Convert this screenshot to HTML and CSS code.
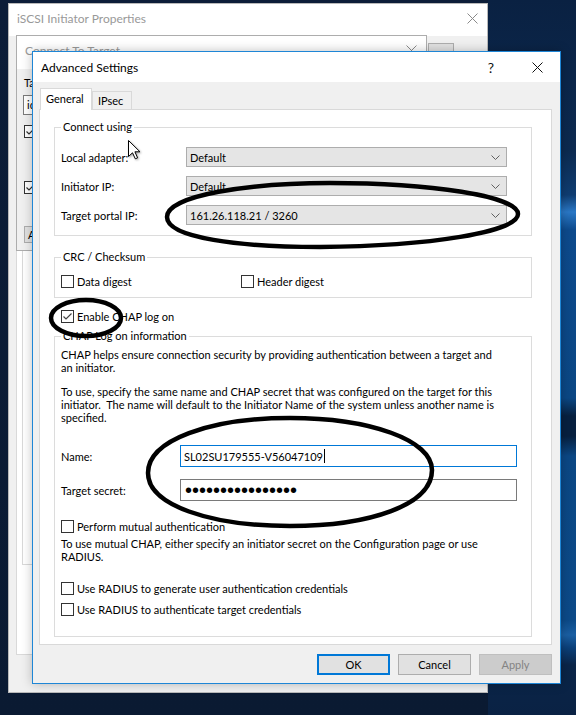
FILE: index.html
```html
<!DOCTYPE html>
<html lang="en">
<head>
<meta charset="utf-8">
<title>Advanced Settings</title>
<link rel="stylesheet" href="styles.css">
</head>
<body>
<div class="win win-iscsi">
  <div class="titlebar tb-small">
    <span class="title inactive">iSCSI Initiator Properties</span>
    <span class="tb-btn tb-btn-small"><svg width="11" height="11" viewBox="0 0 11 11"><path d="M0.5 0.5 L10.5 10.5 M10.5 0.5 L0.5 10.5" stroke="#8a8a8a" stroke-width="1" fill="none"/></svg></span>
  </div>
  <div class="iscsi-body">
    <span class="mini-btn">..</span>
    <div class="bg-tabpage">
      <div class="bg-innerbox"></div>
    </div>
    <div class="btnrow bg-btnrow">
      <span class="btn"></span>
      <span class="btn"></span>
      <span class="btn"></span>
    </div>
  </div>
</div>

<div class="win win-connect">
  <div class="titlebar tb-connect">
    <span class="title inactive">Connect To Target</span>
    <span class="tb-btn tb-btn-small"><svg width="11" height="11" viewBox="0 0 11 11"><path d="M0.5 0.5 L10.5 10.5 M10.5 0.5 L0.5 10.5" stroke="#8a8a8a" stroke-width="1" fill="none"/></svg></span>
  </div>
  <div class="connect-body">
    <div class="c-label">Target:</div>
    <div class="c-input">iqn</div>
    <div class="cbrow c-cb1"><span class="cb"><svg width="11" height="11" viewBox="0 0 11 11"><path d="M1.5 5.5 L4 8 L9.5 2.5" stroke="#333" stroke-width="1.2" fill="none"/></svg></span></div>
    <div class="cbrow c-cb2"><span class="cb"><svg width="11" height="11" viewBox="0 0 11 11"><path d="M1.5 5.5 L4 8 L9.5 2.5" stroke="#333" stroke-width="1.2" fill="none"/></svg></span></div>
    <span class="c-btn">Advanced...</span>
  </div>
</div>

<div class="win win-adv">
  <div class="titlebar tb-adv">
    <span class="title">Advanced Settings</span>
    <span class="tb-btn tb-help">?</span>
    <span class="tb-btn"><svg width="11" height="11" viewBox="0 0 11 11"><path d="M0.5 0.5 L10.5 10.5 M10.5 0.5 L0.5 10.5" stroke="#111" stroke-width="1" fill="none"/></svg></span>
  </div>
  <div class="adv-body">
    <div class="tabs">
      <span class="tab tab-active">General</span>
      <span class="tab tab-ipsec">IPsec</span>
    </div>
    <div class="panel">
      <fieldset class="group g-connect">
        <legend>Connect using</legend>
        <div class="frow">
          <span class="flabel">Local adapter:</span>
          <span class="combo"><span class="combo-text">Default</span><svg class="chev" width="9" height="5" viewBox="0 0 9 5"><path d="M0.5 0.5 L4.5 4.5 L8.5 0.5" stroke="#606060" stroke-width="1" fill="none"/></svg></span>
        </div>
        <div class="frow">
          <span class="flabel">Initiator IP:</span>
          <span class="combo"><span class="combo-text">Default</span><svg class="chev" width="9" height="5" viewBox="0 0 9 5"><path d="M0.5 0.5 L4.5 4.5 L8.5 0.5" stroke="#606060" stroke-width="1" fill="none"/></svg></span>
        </div>
        <div class="frow">
          <span class="flabel">Target portal IP:</span>
          <span class="combo"><span class="combo-text">161.26.118.21 / 3260</span><svg class="chev" width="9" height="5" viewBox="0 0 9 5"><path d="M0.5 0.5 L4.5 4.5 L8.5 0.5" stroke="#606060" stroke-width="1" fill="none"/></svg></span>
        </div>
      </fieldset>

      <fieldset class="group g-crc">
        <legend>CRC / Checksum</legend>
        <div class="crc-row">
          <div class="cbrow crc-item"><span class="cb"></span><span class="cb-text">Data digest</span></div>
          <div class="cbrow"><span class="cb"></span><span class="cb-text">Header digest</span></div>
        </div>
      </fieldset>

      <div class="cbrow chap-enable"><span class="cb"><svg width="11" height="11" viewBox="0 0 11 11"><path d="M1.5 5.5 L4 8 L9.5 2.5" stroke="#444" stroke-width="1.2" fill="none"/></svg></span><span class="cb-text">Enable CHAP log on</span></div>

      <fieldset class="group g-chap">
        <legend>CHAP Log on information</legend>
        <p class="para p1">CHAP helps ensure connection security by providing authentication between a target and<br>an initiator.</p>
        <p class="para p2">To use, specify the same name and CHAP secret that was configured on the target for this<br>initiator.&nbsp; The name will default to the Initiator Name of the system unless another name is<br>specified.</p>
        <div class="irow r-name">
          <span class="ilabel">Name:</span>
          <span class="tinput focused">SL02SU179555-V56047109<span class="caret"></span></span>
        </div>
        <div class="irow r-secret">
          <span class="ilabel">Target secret:</span>
          <span class="tinput"><span class="dots">&#8226;&#8226;&#8226;&#8226;&#8226;&#8226;&#8226;&#8226;&#8226;&#8226;&#8226;&#8226;&#8226;&#8226;&#8226;&#8226;</span></span>
        </div>
        <div class="cbrow r-mutual"><span class="cb"></span><span class="cb-text">Perform mutual authentication</span></div>
        <p class="para p3">To use mutual CHAP, either specify an initiator secret on the Configuration page or use<br>RADIUS.</p>
        <div class="cbrow r-rad1"><span class="cb"></span><span class="cb-text">Use RADIUS to generate user authentication credentials</span></div>
        <div class="cbrow r-rad2"><span class="cb"></span><span class="cb-text">Use RADIUS to authenticate target credentials</span></div>
      </fieldset>
    </div>
    <div class="btnrow adv-btnrow">
      <span class="btn btn-default">OK</span>
      <span class="btn">Cancel</span>
      <span class="btn btn-disabled">Apply</span>
    </div>
  </div>
</div>

<svg class="ink" width="576" height="715" viewBox="0 0 576 715">
  <path d="M167,217 C167,195 250,183 330,183 C430,183 518,196 518,214 C518,232 430,246 320,247 C240,247 167,238 167,217 Z" fill="none" stroke="#000" stroke-width="4.5"/>
  <ellipse cx="86" cy="318" rx="35" ry="18" fill="none" stroke="#000" stroke-width="4.5"/>
  <path d="M148,473 C148,440 210,418 290,418 C370,418 432,440 432,470 C432,505 370,526 290,526 C210,526 148,505 148,473 Z" fill="none" stroke="#000" stroke-width="4.5"/>
</svg>

<svg class="cursor" width="14" height="21" viewBox="0 0 14 21">
  <path d="M0.5 0.5 L0.5 16.5 L4.5 12.8 L7.3 18.8 L9.6 17.8 L6.9 11.8 L12 11.8 Z" fill="#fff" stroke="#000" stroke-width="1" stroke-linejoin="miter"/>
</svg>
</body>
</html>
```

FILE: styles.css
```css
* { box-sizing: border-box; }

html, body {
  margin: 0;
  padding: 0;
}

body {
  width: 576px;
  height: 715px;
  overflow: hidden;
  position: relative;
  font-family: Lato, "Liberation Sans", sans-serif;
  font-size: 11px;
  line-height: 13px;
  color: #000;
  background:
    linear-gradient(180deg,
      #0a2142 0px,
      #0c2a50 150px,
      #0f3d72 195px,
      #2a78c6 212px,
      #0d4a8c 230px,
      #0b4784 398px,
      #07203f 416px,
      #07203f 436px,
      #0b4784 456px,
      #0c4a88 620px,
      #1a5fa3 635px,
      #0b3f78 648px,
      #0a2548 665px,
      #0a2244 715px) right top / 88px 100% no-repeat,
    linear-gradient(180deg, #0c1d38 0%, #0a1a32 100%);
}

/* ---------- generic window ---------- */
.win {
  position: absolute;
  display: flex;
  flex-direction: column;
  background: #f0f0f0;
}

.titlebar {
  display: flex;
  align-items: center;
  background: #fff;
  flex: none;
}

.title {
  flex: 1;
  padding-left: 8px;
  font-size: 12px;
  white-space: nowrap;
}

.title.inactive { color: #999; }

.tb-btn {
  width: 46px;
  height: 100%;
  display: flex;
  align-items: center;
  justify-content: center;
  flex: none;
}

.tb-btn-small { width: 30px; }

.tb-help {
  font-size: 14px;
  color: #111;
}

/* ---------- iSCSI background window ---------- */
.win-iscsi {
  left: 8px;
  top: 3px;
  width: 480px;
  height: 690px;
  border: 1px solid #b9b9b9;
}

.tb-small {
  height: 32px;
  padding-bottom: 3px;
}

.iscsi-body {
  flex: 1;
  display: flex;
  flex-direction: column;
  padding: 7px 7px 8px 7px;
}

.mini-btn {
  align-self: flex-end;
  margin-right: 26px;
  width: 26px;
  height: 20px;
  border: 1px solid #adadad;
  background: #e1e1e1;
  text-align: center;
  line-height: 10px;
}

.bg-tabpage {
  flex: 1;
  margin-top: 4px;
  background: #fff;
  border: 1px solid #d9d9d9;
  padding: 5px 5px 89px 5px;
  display: flex;
  flex-direction: column;
}

.bg-innerbox {
  flex: 1;
  border: 1px solid #d9d9d9;
}

.btnrow {
  display: flex;
  justify-content: flex-end;
  gap: 8px;
  flex: none;
}

.bg-btnrow {
  margin-top: 6px;
  margin-right: -1px;
}

.bg-btnrow .btn { height: 23px; }

.btn {
  width: 73px;
  height: 21px;
  border: 1px solid #adadad;
  background: #e1e1e1;
  display: flex;
  align-items: center;
  justify-content: center;
}

.btn-default { border: 2px solid #0078d7; }

.btn-disabled {
  background: #cccccc;
  border-color: #bfbfbf;
  color: #838383;
}

/* ---------- Connect To Target window ---------- */
.win-connect {
  left: 16px;
  top: 35px;
  width: 411px;
  height: 216px;
  border: 1px solid #adadad;
}

.tb-connect {
  height: 33px;
  padding-bottom: 5px;
}

.connect-body {
  flex: 1;
  display: flex;
  flex-direction: column;
  align-items: flex-start;
  padding: 7px 6px 0 7px;
}

.c-label { line-height: 14px; }

.c-input {
  margin-top: 5px;
  margin-left: -1px;
  width: 380px;
  height: 20px;
  border: 1px solid #7a7a7a;
  background: #fff;
  padding-left: 3px;
  line-height: 18px;
  white-space: nowrap;
}

.c-cb1 { margin-top: 10px; }
.c-cb2 { margin-top: 43px; }

.c-btn {
  margin-top: 32px;
  width: 75px;
  height: 17px;
  border: 1px solid #adadad;
  background: #e1e1e1;
  padding-left: 3px;
  line-height: 15px;
}

/* ---------- Advanced Settings window ---------- */
.win-adv {
  left: 32px;
  top: 51px;
  width: 529px;
  height: 633px;
  border: 1px solid #1e86d6;
  box-shadow: 0 0 10px rgba(0, 0, 0, 0.25);
}

.tb-adv { height: 30px; }

.adv-body {
  flex: 1;
  display: flex;
  flex-direction: column;
  padding: 6px 8px 8px 6px;
}

.tabs {
  display: flex;
  align-items: flex-end;
  height: 22px;
  margin-left: 1px;
  margin-bottom: -1px;
  position: relative;
  z-index: 1;
}

.tab {
  border: 1px solid #d9d9d9;
  border-bottom: none;
  padding-left: 5px;
  white-space: nowrap;
}

.tab-active {
  width: 52px;
  height: 22px;
  background: #fff;
  line-height: 19px;
}

.tab-ipsec {
  width: 40px;
  height: 18px;
  margin-bottom: 1px;
  background: #f0f0f0;
  line-height: 17px;
}

.panel {
  flex: none;
  height: 536px;
  background: #fff;
  border: 1px solid #d9d9d9;
  padding: 10px 19px 0 14px;
  display: flex;
  flex-direction: column;
}

.adv-btnrow { margin-top: 9px; }

/* ---------- group boxes ---------- */
.group {
  margin: 0;
  min-width: 0;
  border: 1px solid #dcdcdc;
}

.group legend {
  padding: 0 2px;
  line-height: 14px;
}

.g-connect { padding: 13px 23px 10px 6px; }
.g-crc { margin-top: 14px; padding: 11px 0 9px 6px; }
.g-chap { margin-top: 6px; padding: 5px 0 20px 6px; }

.frow {
  display: flex;
  align-items: center;
  height: 20px;
}

.frow + .frow { margin-top: 9px; }

.flabel { width: 125px; flex: none; white-space: nowrap; }

.combo {
  width: 321px;
  height: 20px;
  border: 1px solid #adadad;
  background: #e5e5e5;
  display: flex;
  align-items: center;
  padding: 0 6px 0 3px;
}

.combo-text { flex: 1; white-space: nowrap; }

.chev { flex: none; }

/* ---------- checkboxes ---------- */
.cbrow {
  display: flex;
  align-items: center;
  height: 13px;
  white-space: nowrap;
}

.cb {
  width: 13px;
  height: 13px;
  border: 1px solid #333;
  background: #fff;
  flex: none;
  display: flex;
  align-items: center;
  justify-content: center;
}

.cb-text { margin-left: 3px; }

.crc-row { display: flex; }
.crc-item { width: 180px; }

.chap-enable { margin-top: 12px; margin-left: 7px; }

/* ---------- CHAP area ---------- */
.para {
  margin: 0;
  white-space: nowrap;
  line-height: 13px;
}

.p2 { margin-top: 11px; }
.p3 { margin-top: 4px; }

.irow {
  display: flex;
  align-items: center;
  height: 22px;
}

.r-name { margin-top: 21px; }
.r-secret { margin-top: 12px; }

.ilabel { width: 119px; flex: none; }

.tinput {
  width: 337px;
  height: 22px;
  border: 1px solid #7a7a7a;
  background: #fff;
  display: flex;
  align-items: center;
  padding-left: 3px;
  white-space: nowrap;
}

.tinput.focused { border-color: #0078d7; }

.caret {
  width: 1px;
  height: 14px;
  background: #000;
  margin-left: 1px;
}

.dots {
  font-family: "Liberation Sans", Arial, sans-serif;
  font-size: 20px;
  line-height: 18px;
  padding-left: 1px;
}

.r-mutual { margin-top: 19px; }
.r-rad1 { margin-top: 19px; }
.r-rad2 { margin-top: 8px; }

/* ---------- overlays ---------- */
.ink {
  position: absolute;
  left: 0;
  top: 0;
  pointer-events: none;
}

.cursor {
  position: absolute;
  left: 128px;
  top: 140px;
  filter: drop-shadow(1px 1px 1px rgba(0, 0, 0, 0.35));
}
```
